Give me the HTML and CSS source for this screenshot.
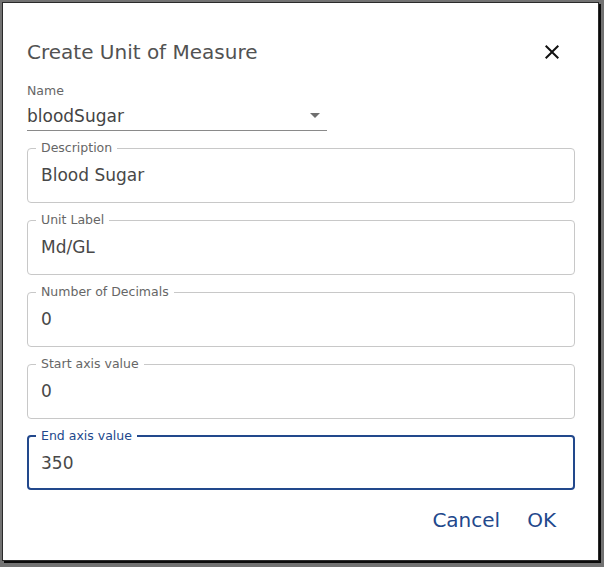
FILE: index.html
```html
<!DOCTYPE html>
<html>
<head>
<meta charset="utf-8">
<link rel="stylesheet" href="styles.css">
</head>
<body>
<div class="dialog">
  <div class="header">
    <h2 class="title">Create Unit of Measure</h2>
    <button class="close" aria-label="close">
      <svg viewBox="0 0 24 24" width="24" height="24"><path d="M19 6.41L17.59 5 12 10.59 6.41 5 5 6.41 10.59 12 5 17.59 6.41 19 12 13.41 17.59 19 19 17.59 13.41 12z" fill="#111"/></svg>
    </button>
  </div>
  <div class="content">
    <div class="select">
      <div class="select-label">Name</div>
      <div class="select-input">
        <span>bloodSugar</span>
        <svg class="caret" viewBox="0 0 10 5" width="10" height="5"><path d="M0 0h10L5 5z" fill="#6f6f6f"/></svg>
      </div>
    </div>
    <fieldset class="field"><legend>Description</legend><div class="value">Blood Sugar</div></fieldset>
    <fieldset class="field"><legend>Unit Label</legend><div class="value">Md/GL</div></fieldset>
    <fieldset class="field"><legend>Number of Decimals</legend><div class="value">0</div></fieldset>
    <fieldset class="field"><legend>Start axis value</legend><div class="value">0</div></fieldset>
    <fieldset class="field focused"><legend>End axis value</legend><div class="value">350</div></fieldset>
  </div>
  <div class="actions">
    <button class="btn">Cancel</button>
    <button class="btn">OK</button>
  </div>
</div>
</body>
</html>
```
FILE: styles.css
```css
* { box-sizing: border-box; }
html, body { margin: 0; height: 100%; }
body {
  background: #727272;
  padding: 2px;
  font-family: "DejaVu Sans", "Open Sans", sans-serif;
}
.dialog {
  width: 597px;
  height: 559px;
  background: #fff;
  border: 1px solid #2a2a2a;
  box-shadow: 2px 2px 0 #0a0a0a;
  display: flex;
  flex-direction: column;
  padding: 0 23px 0 24px;
}
.header {
  display: flex;
  align-items: center;
  justify-content: space-between;
  padding-top: 33px;
  height: 64px;
}
.title {
  margin: 0;
  font-size: 20px;
  font-weight: 400;
  line-height: 30px;
  color: #525252;
}
.close {
  border: 0;
  background: none;
  padding: 0;
  width: 24px;
  height: 24px;
  margin-right: 11px;
  display: flex;
}
.content {
  display: flex;
  flex-direction: column;
  gap: 11px;
  padding-top: 17px;
}
.select { width: 300px; }
.select-label {
  font-size: 12.5px;
  line-height: 14px;
  color: #666;
}
.select-input {
  display: flex;
  align-items: center;
  justify-content: space-between;
  height: 31px;
  padding: 2px 0 0 0;
  border-bottom: 1px solid #8a8a8a;
  font-size: 17px;
  line-height: 24px;
  color: #444;
  margin-top: 2px;
}
.caret { margin-right: 7px; margin-top: -2px; }
.field {
  margin: 0;
  padding: 0 13px;
  border: 1px solid #c8c8c8;
  border-radius: 4px;
  min-width: 0;
}
.field legend {
  font-size: 12.5px;
  line-height: 12px;
  color: #666;
  padding: 0 5px;
  margin-left: -5px;
}
.value {
  height: 48px;
  padding-top: 9px;
  font-size: 17px;
  line-height: 24px;
  color: #484848;
}
.field.focused {
  border: 2px solid #22488c;
  padding: 0 12px;
}
.field.focused legend { color: #22488c; }
.field.focused .value { height: 46px; padding-top: 9px; }
.actions {
  display: flex;
  justify-content: flex-end;
  gap: 11px;
  padding-top: 14px;
  padding-right: 11px;
}
.btn {
  border: 0;
  background: none;
  font-family: inherit;
  font-size: 20px;
  line-height: 24px;
  color: #22488c;
  padding: 4px 8px;
}
```
